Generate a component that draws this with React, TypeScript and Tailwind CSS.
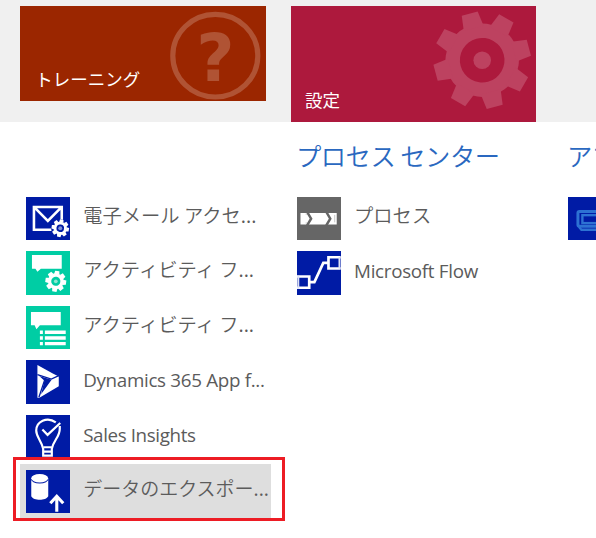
import type { ReactNode } from 'react';

const JP = "font-['Noto_Sans_CJK_JP',sans-serif] font-[350]";
const LATIN = "font-['Open_Sans','Noto_Sans',sans-serif] pt-[3px]";

function Icon({ bg, children }: { bg: string; children: ReactNode }) {
  return (
    <svg viewBox="0 0 44 44" className={`h-[43.7px] w-[43.7px] shrink-0 ${bg}`} fill="none">
      {children}
    </svg>
  );
}

function Gear({ x, y, r, hole, fill, holeFill, width, rotate = 0 }: {
  x: number; y: number; r: number; hole: number; fill: string; holeFill: string; width: number; rotate?: number;
}) {
  return (
    <g transform={`translate(${x} ${y}) rotate(${rotate})`}>
      <circle r={r * 0.76} fill={fill} />
      {[0, 45, 90, 135, 180, 225, 270, 315].map((a) => (
        <path key={a} transform={`rotate(${a})`} fill={fill}
          d={`M${-width * 0.62} ${-r * 0.68}L${-width / 2} ${-r}H${width / 2}L${width * 0.62} ${-r * 0.68}Z`} />
      ))}
      <circle r={hole} fill={holeFill} />
    </g>
  );
}

function MailIcon() {
  return (
    <Icon bg="bg-[#001ba5]">
      <path d="M26 33H8V10H36V24M8 10L22 24L36 10" stroke="#fff" strokeWidth="2.6" />
      <circle cx="34.5" cy="31.5" r="9.2" fill="#001ba5" />
      <Gear x={34.5} y={31.5} r={8.8} hole={3.8} fill="#fff" holeFill="#001ba5" width={3.5} rotate={10} />
      <circle cx="34.5" cy="31.5" r="2" fill="#8091d5" />
    </Icon>
  );
}

function ChatGearIcon() {
  return (
    <Icon bg="bg-[#00cda4]">
      <path d="M6 4H36V18H15L11.5 21L9.5 18H6Z" fill="#fff" />
      <Gear x={30} y={30.5} r={10.5} hole={4.6} fill="#fff" holeFill="#00cda4" width={4.3} rotate={8} />
      <circle cx="30" cy="30.5" r="1.9" fill="#8de6d0" />
    </Icon>
  );
}

function ChatListIcon() {
  return (
    <Icon bg="bg-[#00cda4]">
      <path d="M5 6H35V19.5H14L10.5 23.5L8.7 19.5H5Z" fill="#fff" />
      <path d="M14 26.5H17M14 32.2H17M14 37.9H17M19 26.5H40M19 32.2H40M19 37.9H40" stroke="#fff" strokeWidth="3.4" />
    </Icon>
  );
}

function DynamicsIcon() {
  return (
    <Icon bg="bg-[#001ba5]">
      <path d="M11.5 5L27 13.5L33 16.5V26.5L13.5 38H11.5Z" fill="#fff" />
      <path d="M13.3 16.2L25.8 19.8L15.2 34.5L18.6 20.8Z" fill="#001ba5" />
      <path d="M11.5 14.7L25.5 19.3L33 15.8M18.8 20L13 37.5" stroke="#001ba5" strokeWidth="1.3" />
    </Icon>
  );
}

function BulbIcon() {
  return (
    <Icon bg="bg-[#001ba5]">
      <path d="M30 7.5C21 .8 10.3 7 10.3 15.7C10.3 22 15 24.7 17.3 34V41H26V34C28 24.8 34 22 34 14V11" stroke="#fff" strokeWidth="2.2" />
      <path d="M16.5 14.5L21.7 20L34.5 8M17.5 32.5H26M17.5 36.8H26" stroke="#fff" strokeWidth="2.2" />
    </Icon>
  );
}

function ExportIcon() {
  return (
    <Icon bg="bg-[#001ba5]">
      <path d="M5.3 9V26.5C7.5 31.2 20 31.2 22.4 26.5V9Z" fill="#fff" />
      <ellipse cx="13.8" cy="8.9" rx="8.9" ry="4.8" fill="#001ba5" />
      <ellipse cx="13.8" cy="8.3" rx="8.5" ry="4.2" fill="#fff" />
      <path d="M31 42V27M24.5 33.5L31 26.5L37.5 33.5" stroke="#fff" strokeWidth="3.1" />
    </Icon>
  );
}

function ProcessIcon() {
  return (
    <Icon bg="bg-[#666]">
      <path d="M3.5 16H40V27.6H3.5Z" fill="#fff" />
      <path d="M10.2 15L14.2 21.8L10.2 28.6M29.5 15L33.5 21.8L29.5 28.6" stroke="#666" strokeWidth="2.5" />
      <path d="M9.3 16.5V18M9.3 25.5V27M38 18V25.5" stroke="#c8c8c8" strokeWidth="1" />
    </Icon>
  );
}

function FlowIcon() {
  return (
    <Icon bg="bg-[#001ba5]">
      <path d="M0 25.7H12.3V37H0M44 6.3H31.7V17.6H44M12.3 31.4H17.5L26.5 12H31.7" stroke="#fff" strokeWidth="2.7" />
      <path d="M1.3 25V38M42.8 6V18" stroke="#dfe3f5" strokeWidth="2" />
    </Icon>
  );
}

function ScreenIcon() {
  return (
    <Icon bg="bg-[#001ba5]">
      <rect x="10" y="14.5" width="34" height="15" rx="1.5" stroke="#2d72d3" strokeWidth="3" />
      <rect x="14.5" y="18.3" width="26" height="8" stroke="#2d72d3" strokeWidth="2.4" />
      <path d="M11 30L13.5 33H44" stroke="#2d72d3" strokeWidth="2.4" />
    </Icon>
  );
}

function Row({ icon, label, font = `${JP} text-[19.3px]`, selected = false }: {
  icon: ReactNode; label: string; font?: string; selected?: boolean;
}) {
  return (
    <div className={`flex h-[54.6px] w-[251px] items-center gap-[13.4px] pl-[6px] text-[#5b5b5b] ${selected ? 'bg-[#dedede]' : ''}`}>
      {icon}
      <span className={`whitespace-nowrap pb-[7px] leading-[30px] ${font}`}>{label}</span>
    </div>
  );
}

function Heading({ children }: { children?: ReactNode }) {
  return (
    <h2 className={`h-[68.8px] whitespace-nowrap pl-[5px] pt-[13px] text-[25.3px] leading-[40px] tracking-[-0.5px] text-[#2a68c0] ${JP}`}>
      {children}
    </h2>
  );
}

export default function App() {
  return (
    <div className="relative h-[538px] w-[596px] overflow-hidden bg-white">
      <header className="flex h-[122.3px] items-start gap-[25px] bg-[#f0f0f0] pl-[20.3px] pt-[6.3px]">
        <div className="flex h-[94.7px] w-[245.7px] items-end justify-between bg-[#9b2600] pl-[15px] text-white">
          <span className="pb-[8px] font-['Noto_Sans_CJK_JP',sans-serif] text-[17.5px] leading-[28px]">トレーニング</span>
          <svg viewBox="0 0 96 95" className="h-[95px] w-[96px]">
            <ellipse cx="45.3" cy="49.7" rx="42.5" ry="41.3" fill="none" stroke="#b05334" strokeWidth="5.2" />
            <text x="45.5" y="75.2" textAnchor="middle" fill="#b05334" className="font-['DejaVu_Sans',sans-serif] text-[66px] font-bold">?</text>
          </svg>
        </div>
        <div className="flex h-[116px] w-[245px] items-end justify-between bg-[#ad193d] pl-[14px] text-white">
          <span className="pb-[8px] font-['Noto_Sans_CJK_JP',sans-serif] text-[17.5px] leading-[28px]">設定</span>
          <svg viewBox="0 0 104 116" className="h-[116px] w-[104px]">
            <Gear x={50.2} y={54.2} r={48.3} hole={22.3} fill="#bd4260" holeFill="#ad193d" width={16.5} rotate={-15} />
            <circle cx="50.2" cy="54.2" r="8.8" fill="#bd4260" />
          </svg>
        </div>
      </header>
      <main className="flex gap-[19.9px] pl-[20.1px]">
        <section className="shrink-0">
          <Heading />
          <Row icon={<MailIcon />} label="電子メール アクセ..." />
          <Row icon={<ChatGearIcon />} label="アクティビティ フ..." />
          <Row icon={<ChatListIcon />} label="アクティビティ フ..." />
          <Row icon={<DynamicsIcon />} label="Dynamics 365 App f..." font={`${LATIN} text-[18.8px] tracking-[-0.31px]`} />
          <Row icon={<BulbIcon />} label="Sales Insights" font={`${LATIN} text-[18.8px] tracking-[-0.38px]`} />
          <Row icon={<ExportIcon />} label="データのエクスポー..." font={`${JP} text-[19px]`} selected />
        </section>
        <section className="shrink-0">
          <Heading>プロセス センター</Heading>
          <Row icon={<ProcessIcon />} label="プロセス" />
          <Row icon={<FlowIcon />} label="Microsoft Flow" font={`${LATIN} text-[18.8px] tracking-[-0.3px]`} />
        </section>
        <section className="shrink-0">
          <Heading>アプ</Heading>
          <Row icon={<ScreenIcon />} label="" />
        </section>
      </main>
      <div className="absolute left-[13px] top-[457px] h-[64px] w-[272px] border-3 border-[#ed1c24]" />
    </div>
  );
}
